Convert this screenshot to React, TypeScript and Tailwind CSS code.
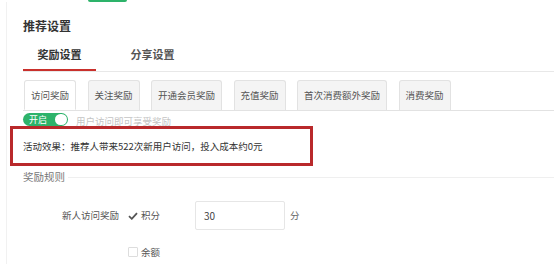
import React from "react";

const subTabs = ["访问奖励", "关注奖励", "开通会员奖励", "充值奖励", "首次消费额外奖励", "消费奖励"];

export default function App() {
  return (
    <div
      className="w-[554px] h-[264px] overflow-hidden bg-white text-[#333]"
      style={{ fontFamily: '"Noto Sans CJK SC", "Noto Sans", sans-serif' }}
    >
      <div className="ml-[88px] w-[39px] h-[2px] rounded-b-[3px] bg-[#2db36a]" />
      <div className="ml-[6px] border-l border-[#f1f1f1] pl-[16px] h-[262px]">
        <div className="pt-[16px] text-[12px] leading-[16px] font-bold text-[#333]">推荐设置</div>

        <div className="mt-[13px] flex gap-[20px] border-b border-[#e8e8e8]">
          <div className="w-[73px] text-center text-[11px] leading-[14px] pb-[8px] font-semibold text-[#333] border-b-2 border-[#c9302c]">
            奖励设置
          </div>
          <div className="w-[73px] text-center text-[11px] leading-[14px] pb-[8px] font-semibold text-[#555]">
            分享设置
          </div>
        </div>

        <div className="mt-[8px] flex gap-[11.5px] border-b border-[#e2e2e2] pl-[1px]">
          {subTabs.map((t, i) => (
            <div
              key={t}
              className={
                i === 0
                  ? "h-[30px] px-[6px] flex items-center text-[9.5px] text-[#555] bg-white border border-[#e2e2e2] border-b-white rounded-t-[3px] -mb-[1px]"
                  : "h-[30px] px-[6px] flex items-center text-[9.5px] text-[#555] bg-[#f4f4f4] border border-[#e2e2e2] border-b-0 rounded-t-[3px]"
              }
            >
              {t}
            </div>
          ))}
        </div>

        <div className="mt-[2px] flex items-center gap-[8px] h-[13px]">
          <div className="w-[45px] h-[13px] rounded-full bg-[#2db36a] flex items-center justify-between pl-[6px] pr-[1px]">
            <span className="text-[9px] leading-[11px] text-white">开启</span>
            <span className="w-[12px] h-[11px] rounded-full bg-white" />
          </div>
          <span className="text-[9.5px] leading-[13px] text-[#c4c4c4] pt-[4px]">用户访问即可享受奖励</span>
        </div>

        <div className="-ml-[13px] w-[303px] border-[3px] border-[#b9292b] pl-[10px] pt-[10px] pb-[10px]">
          <div className="text-[9.5px] leading-[14px] text-[#333]">活动效果：推荐人带来522次新用户访问，投入成本约0元</div>
        </div>

        <div className="mt-[4px] flex items-center gap-[3px]">
          <span className="text-[10.5px] leading-[14px] text-[#777]">奖励规则</span>
          <div className="flex-1 h-px bg-[#efefef]" />
        </div>

        <div className="mt-[17px] flex items-center h-[29px]">
          <div className="w-[96px] text-right text-[9.5px] text-[#555]">新人访问奖励</div>
          <div className="ml-[9px] flex items-center gap-[3px]">
            <svg width="10" height="8" viewBox="0 0 10 8">
              <path d="M1 4.2 L3.8 6.8 L9 1.2" fill="none" stroke="#555" strokeWidth="1.8" />
            </svg>
            <span className="text-[9.5px] text-[#555]">积分</span>
          </div>
          <div className="ml-[35px] w-[90px] h-[29px] border border-[#e6e6e6] rounded-[2px] flex items-center pl-[8px] text-[10px] text-[#444]">
            30
          </div>
          <span className="ml-[5px] text-[9.5px] text-[#666]">分</span>
        </div>

        <div className="mt-[15px] ml-[105px] flex items-center gap-[3px] h-[14px]">
          <div className="w-[10px] h-[10px] border border-[#ddd] rounded-[1px] bg-white" />
          <span className="text-[9.5px] text-[#555]">余额</span>
        </div>
      </div>
    </div>
  );
}
